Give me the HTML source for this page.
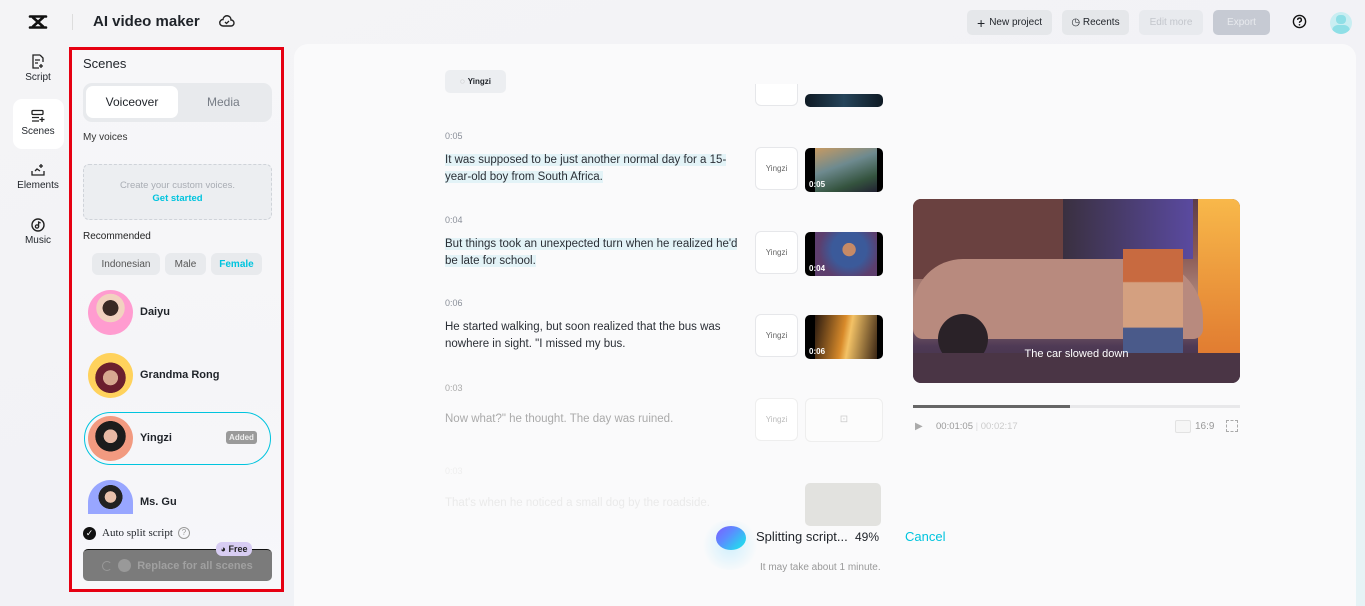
<!DOCTYPE html>
<html><head><meta charset="utf-8"><style>
*{box-sizing:border-box;margin:0;padding:0}
body{width:1365px;height:606px;overflow:hidden;font-family:"Liberation Sans",Arial,sans-serif;background:linear-gradient(160deg,#f4f4f6 0%,#f2f2f6 55%,#e6f3f6 100%);position:relative;color:#1f2329}
.abs{position:absolute}
.nav{position:absolute;left:12px;width:52px;text-align:center;font-size:10px;color:#1f2329}
.nav svg{display:block;margin:0 auto 3px}
.btn{position:absolute;top:10px;height:25px;border-radius:5px;font-size:10px;display:flex;align-items:center;justify-content:center;gap:4px}
.main{position:absolute;left:294px;top:44px;width:1062px;height:562px;background:#fafafb;border-radius:14px 14px 0 0}
.ts{position:absolute;left:445px;font-size:9px;color:#8a8f99}
.tx{position:absolute;left:445px;font-size:11.5px;line-height:17px;color:#2b2f36;width:300px}
.hl{background:#e3f3f7}
.vb{position:absolute;left:755px;width:43px;height:43px;border:1px solid #e6e7ea;border-radius:6px;background:#fff;font-size:8px;color:#666;display:flex;align-items:center;justify-content:center}
.th{position:absolute;left:805px;width:78px;height:44px;border-radius:5px;overflow:hidden;background:#000}
.th span{position:absolute;left:4px;bottom:3px;color:#fff;font-size:8px;font-weight:bold}
.av{position:absolute;left:88px;width:45px;height:45px;border-radius:50%}
.vn{position:absolute;left:140px;font-size:11px;font-weight:bold;color:#1f2329}
</style></head><body>
<svg class="abs" style="left:28px;top:14px" width="20" height="16" viewBox="0 0 20 16"><path d="M2 2.5h16M2 13.5h16M5 3.5l10 9M15 3.5l-10 9" stroke="#111" stroke-width="2.6" fill="none" stroke-linecap="round"/></svg>
<div class="abs" style="left:72px;top:14px;width:1px;height:16px;background:#ddd"></div>
<div class="abs" style="left:93px;top:13px;font-size:15px;font-weight:bold">AI video maker</div>
<svg class="abs" style="left:219px;top:14px" width="16" height="14" viewBox="0 0 16 14"><path d="M4 12h8a3 3 0 0 0 0-6 4 4 0 0 0-8-0.5A3 3 0 0 0 4 12z" stroke="#222" stroke-width="1.4" fill="none"/><path d="M6 8l1.5 1.5L10 7" stroke="#222" stroke-width="1.3" fill="none"/></svg>
<div class="btn" style="left:967px;width:85px;background:#e5e7ea;color:#1f2329"><b style="font-size:14px;font-weight:normal">+</b>New project</div>
<div class="btn" style="left:1062px;width:67px;background:#e5e7ea;color:#1f2329">◷ Recents</div>
<div class="btn" style="left:1139px;width:64px;background:#e8eaee;color:#c3c6cc">Edit more</div>
<div class="btn" style="left:1213px;width:57px;background:#c6cad3;color:#e8eaee">Export</div>
<svg class="abs" style="left:1292px;top:14px" width="15" height="15" viewBox="0 0 16 16"><circle cx="8" cy="8" r="6.5" stroke="#111" stroke-width="1.5" fill="none"/><path d="M6 6.3a2 2 0 1 1 2.6 1.9c-.5.2-.6.5-.6 1.2" stroke="#111" stroke-width="1.5" fill="none"/><circle cx="8" cy="11.5" r=".9" fill="#111"/></svg>
<div class="abs" style="left:1330px;top:12px;width:22px;height:22px;border-radius:50%;background:#c9eef2;overflow:hidden"><div style="position:absolute;left:6px;top:3px;width:10px;height:9px;border-radius:4px;background:#8fdfe6"></div><div style="position:absolute;left:2px;top:13px;width:18px;height:10px;border-radius:6px 6px 0 0;background:#8fdfe6"></div></div>
<div class="nav" style="top:54px"><svg width="14" height="15" viewBox="0 0 14 15"><path d="M9 1H2v13h6M9 1l3 3v4M4 6h5M4 9h3M10 10v4M8 12h4" stroke="#222" stroke-width="1.3" fill="none"/></svg>Script</div>
<div class="abs" style="left:13px;top:99px;width:51px;height:50px;background:#fff;border-radius:9px"></div>
<div class="nav" style="top:109px"><svg width="14" height="14" viewBox="0 0 14 14"><rect x="1" y="1.5" width="11" height="4" rx="1" stroke="#222" stroke-width="1.3" fill="none"/><path d="M1 8.5h7M1 12h7M11 8v5M8.5 10.5h5" stroke="#222" stroke-width="1.3"/></svg>Scenes</div>
<div class="nav" style="top:163px"><svg width="14" height="14" viewBox="0 0 14 14"><path d="M1 8v4h12V8M4 8l2-2 3 2M10 1v4M8 3h4" stroke="#222" stroke-width="1.3" fill="none"/></svg>Elements</div>
<div class="nav" style="top:218px"><svg width="14" height="14" viewBox="0 0 14 14"><circle cx="7" cy="7" r="6" stroke="#222" stroke-width="1.4" fill="none"/><circle cx="6" cy="8.5" r="1.6" stroke="#222" stroke-width="1.3" fill="none"/><path d="M7.6 8.5V4l2 1" stroke="#222" stroke-width="1.3" fill="none"/></svg>Music</div>
<div class="abs" style="left:69px;top:47px;width:215px;height:545px;border:3px solid #e60012;background:linear-gradient(180deg,#f7f7f9,#f5f5f8 60%,#f7f7fa)"></div>
<div class="abs" style="left:83px;top:56px;font-size:13px">Scenes</div>
<div class="abs" style="left:83px;top:83px;width:189px;height:39px;background:#e8eaed;border-radius:9px"></div>
<div class="abs" style="left:86px;top:86px;width:92px;height:32px;background:#fff;border-radius:7px;font-size:12px;display:flex;align-items:center;justify-content:center">Voiceover</div>
<div class="abs" style="left:207px;top:95px;font-size:12px;color:#777d86">Media</div>
<div class="abs" style="left:83px;top:132px;font-size:10px;color:#333">My voices</div>
<div class="abs" style="left:83px;top:164px;width:189px;height:56px;border:1px dashed #cfd3d9;border-radius:6px;background:#eceef1;text-align:center;font-size:9.5px;color:#a9adb4;padding-top:14px;line-height:13px">Create your custom voices.<br><b style="color:#00c4de">Get started</b></div>
<div class="abs" style="left:83px;top:231px;font-size:10px;color:#222">Recommended</div>
<div class="abs" style="left:92px;top:253px;width:68px;height:22px;border-radius:6px;background:#e8eaed;font-size:10px;color:#555;display:flex;align-items:center;justify-content:center">Indonesian</div>
<div class="abs" style="left:165px;top:253px;width:41px;height:22px;border-radius:6px;background:#e8eaed;font-size:10px;color:#555;display:flex;align-items:center;justify-content:center">Male</div>
<div class="abs" style="left:211px;top:253px;width:51px;height:22px;border-radius:6px;background:#e8eaed;font-size:10px;color:#00c4de;font-weight:bold;display:flex;align-items:center;justify-content:center">Female</div>
<div class="av" style="top:290px;background:radial-gradient(circle at 50% 40%,#3a2a25 0 22%,#f2d2c0 23% 40%,#ff9cd0 41%)"></div>
<div class="vn" style="top:306px">Daiyu</div>
<div class="av" style="top:353px;background:radial-gradient(circle at 50% 55%,#d7a890 0 22%,#6b1f2e 23% 45%,#ffd25c 46%)"></div>
<div class="vn" style="top:369px">Grandma Rong</div>
<div class="abs" style="left:84px;top:412px;width:187px;height:53px;border:1px solid #00c4de;border-radius:27px"></div>
<div class="av" style="top:416px;background:radial-gradient(circle at 50% 45%,#e9b9a4 0 20%,#1c1c1c 21% 45%,#f29a80 46%)"></div>
<div class="vn" style="top:432px">Yingzi</div>
<div class="abs" style="left:226px;top:431px;width:31px;height:13px;border-radius:3px;background:#9a9a9a;color:#eee;font-size:8px;font-weight:bold;text-align:center;line-height:13px">Added</div>
<div class="av" style="top:480px;height:34px;border-radius:23px 23px 0 0;background:radial-gradient(circle at 50% 50%,#e9c2ac 0 20%,#222 21% 42%,#98a6ff 43%)"></div>
<div class="vn" style="top:496px">Ms. Gu</div>
<div class="abs" style="left:83px;top:527px;width:13px;height:13px;border-radius:50%;background:#111;color:#fff;font-size:9px;text-align:center;line-height:13px">✓</div>
<div class="abs" style="left:102px;top:527px;font-size:11px;font-family:'Liberation Serif',serif">Auto split script</div>
<div class="abs" style="left:178px;top:527px;width:12px;height:12px;border-radius:50%;border:1px solid #999;font-size:8px;color:#999;text-align:center;line-height:10px">?</div>
<div class="abs" style="left:83px;top:549px;width:189px;height:32px;border-radius:5px;background:#7b7b7b;color:#a0a0a0;font-size:11px;font-weight:bold;display:flex;align-items:center;justify-content:center;gap:6px;border-top:1px solid #111"><span style="width:10px;height:10px;border:1.5px solid #999;border-radius:50%;border-right-color:transparent"></span><span style="width:13px;height:13px;border-radius:50%;background:#999"></span>Replace for all scenes</div>
<div class="abs" style="left:216px;top:542px;width:36px;height:14px;border-radius:6px;background:#d8cdf3;font-size:9px;font-weight:bold;color:#222;text-align:center;line-height:14px">◕ Free</div>
<div class="main"></div>
<div class="abs" style="left:445px;top:70px;width:61px;height:23px;border-radius:5px;background:#eceef1;font-size:8px;font-weight:bold;display:flex;align-items:center;justify-content:center;gap:3px"><span style="color:#888">◌</span>Yingzi</div>
<div class="vb" style="left:755px;top:84px;height:22px;border-top:none;border-radius:0 0 6px 6px"></div>
<div class="th" style="top:94px;height:13px;background:linear-gradient(90deg,#0f1a24,#25445a,#0f1a24)"></div>
<div class="ts" style="top:131px">0:05</div>
<div class="tx" style="top:152px"><span class="hl">It was supposed to be just another normal day for a 15-year-old boy from South Africa.</span></div>
<div class="vb" style="top:147px">Yingzi</div>
<div class="th" style="top:148px"><div style="position:absolute;left:10px;right:6px;top:0;bottom:0;background:linear-gradient(160deg,#c79a62,#6e8a8f 40%,#34533e 75%,#223)"></div><span>0:05</span></div>
<div class="ts" style="top:215px">0:04</div>
<div class="tx" style="top:236px"><span class="hl">But things took an unexpected turn when he realized he'd be late for school.</span></div>
<div class="vb" style="top:231px">Yingzi</div>
<div class="th" style="top:232px"><div style="position:absolute;left:10px;right:6px;top:0;bottom:0;background:radial-gradient(circle at 55% 40%,#c68a66 0 15%,#3b5a9a 16% 40%,#5d3e6d 70%)"></div><span>0:04</span></div>
<div class="ts" style="top:298px">0:06</div>
<div class="tx" style="top:319px">He started walking, but soon realized that the bus was nowhere in sight. "I missed my bus.</div>
<div class="vb" style="top:314px">Yingzi</div>
<div class="th" style="top:315px"><div style="position:absolute;left:10px;right:6px;top:0;bottom:0;background:linear-gradient(100deg,#2a1a10,#d88a2a 45%,#f3c266 55%,#3a2514)"></div><span>0:06</span></div>
<div class="ts" style="top:383px;color:#aaa">0:03</div>
<div class="tx" style="top:411px;color:#aaa">Now what?" he thought. The day was ruined.</div>
<div class="vb" style="top:398px;color:#bbb;border-color:#eee">Yingzi</div>
<div class="abs" style="left:805px;top:398px;width:78px;height:44px;border:1px solid #eee;border-radius:6px;background:#fcfcfc;color:#ccc;font-size:10px;text-align:center;line-height:42px">⊡</div>
<div class="ts" style="top:466px;color:#eee">0:03</div>
<div class="tx" style="top:495px;color:#eaeaea;width:400px">That's when he noticed a small dog by the roadside.</div>
<div class="abs" style="left:805px;top:483px;width:76px;height:43px;border-radius:5px;background:#e2e2df"></div>
<div class="abs" style="left:700px;top:520px;width:60px;height:50px;border-radius:50%;background:radial-gradient(circle,rgba(130,220,255,.35),rgba(255,255,255,0) 70%)"></div>
<div class="abs" style="left:716px;top:526px;width:30px;height:24px;border-radius:50%;background:linear-gradient(135deg,#7d5cff 0%,#5b8cff 40%,#2ad0f0 80%)"></div>
<div class="abs" style="left:756px;top:529px;font-size:13px;color:#1f2329">Splitting script...&nbsp; <span style="font-size:12px">49%</span></div>
<div class="abs" style="left:905px;top:529px;font-size:13px;color:#00c4de">Cancel</div>
<div class="abs" style="left:760px;top:562px;font-size:10px;color:#999">It may take about 1 minute.</div>
<div class="abs" style="left:913px;top:199px;width:327px;height:184px;border-radius:8px;overflow:hidden;background:linear-gradient(180deg,#5d3d4a 0%,#8a5a55 30%,#b08a80 55%,#4f3a55 80%,#3a2c44 100%)">
<div style="position:absolute;left:0;top:0;width:150px;height:80px;background:#6a4140"></div>
<div style="position:absolute;left:150px;top:0;width:130px;height:60px;background:linear-gradient(90deg,#3a3040,#5a4aa0)"></div>
<div style="position:absolute;right:0;top:0;width:42px;height:160px;background:linear-gradient(180deg,#f8b84a,#e07a30)"></div>
<div style="position:absolute;left:0;top:60px;width:290px;height:80px;border-radius:50px 60px 10px 10px;background:#b88a7e"></div>
<div style="position:absolute;left:210px;top:50px;width:60px;height:130px;background:linear-gradient(180deg,#c86a40 0 25%,#d4a080 26% 60%,#4a5a8a 61%)"></div>
<div style="position:absolute;left:25px;top:115px;width:50px;height:50px;border-radius:50%;background:#2a2228"></div>
<div style="position:absolute;left:0;top:154px;width:100%;height:30px;background:#4a3545"></div>
<div style="position:absolute;left:0;right:0;top:149px;text-align:center;color:#fff;font-size:11px">The car slowed down</div></div>
<div class="abs" style="left:913px;top:405px;width:327px;height:3px;background:#e8e8ea"></div>
<div class="abs" style="left:913px;top:405px;width:157px;height:3px;background:#666"></div>
<div class="abs" style="left:915px;top:421px;font-size:10px;color:#aaa">▶</div>
<div class="abs" style="left:936px;top:421px;font-size:9.5px;color:#999">00:01:05 <span style="color:#ddd">|</span> <span style="color:#ccc">00:02:17</span></div>
<div class="abs" style="left:1175px;top:420px;width:16px;height:13px;border:1px solid #e2e2e2;border-radius:2px;background:#f6f6f6"></div>
<div class="abs" style="left:1195px;top:421px;font-size:10px;color:#999">16:9</div>
<div class="abs" style="left:1226px;top:420px;width:12px;height:12px;border:1.5px dashed #aaa"></div>
</body></html>
